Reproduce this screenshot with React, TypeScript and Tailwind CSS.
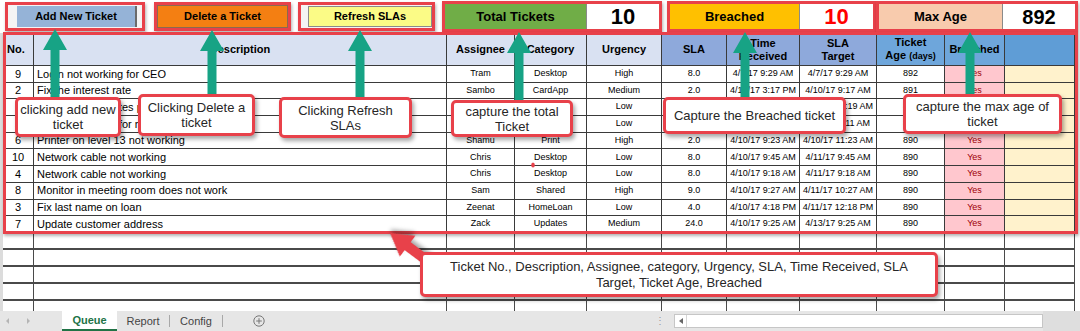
import React from "react";

type Row = {
  no: string;
  desc: string;
  who: string;
  cat: string;
  urg: string;
  sla: string;
  rec: string;
  tgt: string;
  age: string;
};

const rows: Row[] = [
  { no: "9", desc: "Login not working for CEO", who: "Tram", cat: "Desktop", urg: "High", sla: "8.0", rec: "4/7/17 9:29 AM", tgt: "4/7/17 9:29 AM", age: "892" },
  { no: "2", desc: "Fix the interest rate", who: "Sambo", cat: "CardApp", urg: "Medium", sla: "2.0", rec: "4/10/17 3:17 PM", tgt: "4/10/17 9:17 AM", age: "891" },
  { no: "1", desc: "Fix home loan rates page", who: "Kim", cat: "HomeLoan", urg: "Low", sla: "2.0", rec: "4/10/17 9:19 AM", tgt: "4/10/17 11:19 AM", age: "891" },
  { no: "5", desc: "Reset password for manager", who: "Lee", cat: "Desktop", urg: "Low", sla: "8.0", rec: "4/10/17 9:11 AM", tgt: "4/11/17 9:11 AM", age: "890" },
  { no: "6", desc: "Printer on level 13 not working", who: "Shamu", cat: "Print", urg: "High", sla: "2.0", rec: "4/10/17 9:23 AM", tgt: "4/10/17 11:23 AM", age: "890" },
  { no: "10", desc: "Network cable not working", who: "Chris", cat: "Desktop", urg: "Low", sla: "8.0", rec: "4/10/17 9:45 AM", tgt: "4/11/17 9:45 AM", age: "890" },
  { no: "4", desc: "Network cable not working", who: "Chris", cat: "Desktop", urg: "Low", sla: "8.0", rec: "4/10/17 9:18 AM", tgt: "4/11/17 9:18 AM", age: "890" },
  { no: "8", desc: "Monitor in meeting room does not work", who: "Sam", cat: "Shared", urg: "High", sla: "9.0", rec: "4/10/17 9:27 AM", tgt: "4/11/17 10:27 AM", age: "890" },
  { no: "3", desc: "Fix last name on loan", who: "Zeenat", cat: "HomeLoan", urg: "Low", sla: "4.0", rec: "4/10/17 4:18 PM", tgt: "4/11/17 12:18 PM", age: "890" },
  { no: "7", desc: "Update customer address", who: "Zack", cat: "Updates", urg: "Medium", sla: "24.0", rec: "4/10/17 9:25 AM", tgt: "4/13/17 9:25 AM", age: "890" },
];

const cols = "grid grid-cols-[31px_413px_68px_72px_75px_65px_73px_77px_68px_60px_70px]";
const cell = "border-r border-b border-[#3a3a3a] flex items-center justify-center overflow-hidden whitespace-nowrap";

// green arrows: center x, tip y, bottom y
const arrows = [
  [55, 29, 98],
  [212, 30, 96],
  [360, 30, 98],
  [519, 32, 101],
  [745, 32, 98],
  [970, 32, 95],
];

function Callout({ className, children }: { className: string; children: React.ReactNode }) {
  return (
    <div
      className={`absolute bg-white border-[3px] border-[#e8414a] rounded-[5px] shadow-[2px_3px_4px_rgba(0,0,0,0.35)] flex items-center justify-center text-center text-[13px] leading-[15px] text-[#262626] ${className}`}
    >
      {children}
    </div>
  );
}

export default function App() {
  return (
    <div className="relative w-[1080px] h-[331px] overflow-hidden bg-white font-['Liberation_Sans',Arial,sans-serif] text-black">
      {/* toolbar row */}
      <div className="h-[33px] flex items-center">
        <div className="ml-[5px] w-[140px] h-[29px] border-[3px] border-[#e8414a] shadow-[1px_2px_3px_rgba(0,0,0,0.3)] flex items-center bg-[#f4f4f4]">
          <div className="ml-[9px] w-[120px] h-[21px] bg-[#95b3d7] border-r-2 border-[#6b6b6b] flex items-center justify-center text-[11px] font-bold">
            Add New Ticket
          </div>
        </div>
        <div className="ml-[9px] w-[137px] h-[29px] border-[3px] border-[#e8414a] shadow-[1px_2px_3px_rgba(0,0,0,0.3)] flex items-center bg-[#f4f4f4]">
          <div className="w-full h-full bg-[#f47f12] border border-[#8a6a50] flex items-center justify-center text-[11px] font-bold">
            Delete a Ticket
          </div>
        </div>
        <div className="ml-[7px] w-[137px] h-[29px] border-[3px] border-[#e8414a] shadow-[1px_2px_3px_rgba(0,0,0,0.3)] flex items-center bg-[#f4f4f4]">
          <div className="ml-[7px] flex-1 h-[21px] bg-[#fbfb86] border border-[#8a8a8a] flex items-center justify-center text-[11px] font-bold">
            Refresh SLAs
          </div>
        </div>
        <div className="ml-[7px] w-[220px] h-[31px] border-[3px] border-[#e8414a] shadow-[1px_2px_3px_rgba(0,0,0,0.3)] flex">
          <div className="w-[142px] bg-[#70ad47] border-r border-[#8a8a8a] flex items-center justify-center text-[13px] font-bold">
            Total Tickets
          </div>
          <div className="flex-1 bg-white flex items-center justify-center text-[22px] font-bold">10</div>
        </div>
        <div className="ml-[5px] w-[209px] h-[31px] border-[3px] border-[#e8414a] shadow-[1px_2px_3px_rgba(0,0,0,0.3)] flex">
          <div className="w-[130px] bg-[#ffc000] border-r border-[#8a8a8a] flex items-center justify-center text-[13px] font-bold">
            Breached
          </div>
          <div className="flex-1 bg-white flex items-center justify-center text-[22px] font-bold text-[#ff0000]">10</div>
        </div>
        <div className="w-[202px] h-[31px] border-[3px] border-[#e8414a] shadow-[1px_2px_3px_rgba(0,0,0,0.3)] flex">
          <div className="w-[124px] bg-[#f8cbad] border-r border-[#8a8a8a] flex items-center justify-center text-[13px] font-bold">
            Max Age
          </div>
          <div className="flex-1 bg-white flex items-center justify-center text-[20px] font-bold">892</div>
        </div>
      </div>

      {/* sheet */}
      <div className="flex">
        <div className="w-[3px] bg-[#dcdcdc]" />
        <div>
          <div className={`${cols} h-[33px] border-t border-[#3a3a3a] text-[11px] font-bold leading-[13px]`}>
            <div className={`${cell} bg-[#d9e1f2] !justify-start pl-[4px]`}>No.</div>
            <div className={`${cell} bg-[#d9e1f2]`}>Description</div>
            <div className={`${cell} bg-[#d9e1f2]`}>Assignee</div>
            <div className={`${cell} bg-[#d9e1f2]`}>Category</div>
            <div className={`${cell} bg-[#d9e1f2]`}>Urgency</div>
            <div className={`${cell} bg-[#8ea9db]`}>SLA</div>
            <div className={`${cell} bg-[#8ea9db] flex-col text-center`}>
              <span>Time</span>
              <span>Received</span>
            </div>
            <div className={`${cell} bg-[#8ea9db] flex-col text-center`}>
              <span>SLA</span>
              <span>Target</span>
            </div>
            <div className={`${cell} bg-[#6ea6db] flex-col text-center`}>
              <span>Ticket</span>
              <span>
                Age <span className="text-[9px]">(days)</span>
              </span>
            </div>
            <div className={`${cell} bg-[#6ea6db]`}>Breached</div>
            <div className={`${cell} bg-[#5f9dd6]`} />
          </div>

          {rows.map((r, i) => (
            <div key={i} className={`${cols} h-[16.7px]`}>
              <div className={`${cell} text-[11px]`}>{r.no}</div>
              <div className={`${cell} !justify-start pl-[3px] text-[11px]`}>{r.desc}</div>
              <div className={`${cell} text-[9px]`}>{r.who}</div>
              <div className={`${cell} text-[9px]`}>{r.cat}</div>
              <div className={`${cell} text-[9px]`}>{r.urg}</div>
              <div className={`${cell} text-[9px]`}>{r.sla}</div>
              <div className={`${cell} text-[9px]`}>{r.rec}</div>
              <div className={`${cell} text-[9px]`}>{r.tgt}</div>
              <div className={`${cell} text-[9px]`}>{r.age}</div>
              <div className={`${cell} text-[9px] bg-[#ffc7ce] text-[#9c0006]`}>Yes</div>
              <div className={`${cell} bg-[#fff2cc]`} />
            </div>
          ))}

          <div className="h-[78px] overflow-hidden">
            {[0, 1, 2, 3, 4].map((k) => (
              <div key={k} className={`${cols} h-[17px]`}>
                {Array.from({ length: 11 }).map((_, j) => (
                  <div key={j} className="border-r border-b-2 border-[#4a4a4a]" />
                ))}
              </div>
            ))}
          </div>
        </div>
      </div>

      {/* sheet tabs */}
      <div className="h-[20px] bg-[#e6e6e6] flex items-center text-[11px] text-[#444]">
        <svg width="40" height="10" className="ml-[3px]">
          <polygon points="6,2 3,5 6,8" fill="#b5b5b5" />
          <polygon points="24,2 27,5 24,8" fill="#b5b5b5" />
        </svg>
        <div className="ml-[19px] w-[55px] h-full bg-white border-b-2 border-[#217346] flex items-center justify-center font-bold text-[#217346]">
          Queue
        </div>
        <div className="w-[52px] flex items-center justify-center">Report</div>
        <div className="w-px h-[12px] bg-[#a8a8a8]" />
        <div className="w-[52px] flex items-center justify-center">Config</div>
        <div className="w-px h-[12px] bg-[#a8a8a8]" />
        <svg width="12" height="12" className="ml-[30px]" viewBox="0 0 12 12">
          <circle cx="6" cy="6" r="5.2" fill="none" stroke="#777" strokeWidth="1" />
          <path d="M6 3.2v5.6M3.2 6h5.6" stroke="#777" strokeWidth="1" />
        </svg>
        <div className="ml-[390px] text-[#9a9a9a] text-[10px]">⋮</div>
        <div className="ml-[9px] w-[369px] h-[14px] bg-white border border-[#c6c6c6] flex items-center">
          <div className="w-[12px] h-full border-r border-[#d6d6d6] flex items-center justify-center">
            <svg width="4" height="6">
              <polygon points="4,0 0,3 4,6" fill="#666" />
            </svg>
          </div>
        </div>
        <div className="flex-1 h-full bg-[#dedede]" />
      </div>

      {/* annotations */}
      <div className="absolute left-[3px] top-[32px] w-[1075px] h-[202px] border-[3px] border-[#e8414a] shadow-[1px_2px_3px_rgba(0,0,0,0.3)] pointer-events-none" />

      <svg className="absolute left-0 top-0 pointer-events-none" width="1080" height="331">
        {arrows.map(([cx, ty, by], i) => (
          <polygon
            key={i}
            points={`${cx},${ty} ${cx + 12},${ty + 21} ${cx + 4.5},${ty + 21} ${cx + 4.5},${by} ${cx - 4.5},${by} ${cx - 4.5},${ty + 21} ${cx - 12},${ty + 21}`}
            fill="#17a385"
          />
        ))}
        <g transform="translate(390 233) rotate(216.7)" style={{ filter: "drop-shadow(2px 3px 2px rgba(0,0,0,0.35))" }}>
          <polygon points="0,0 -22,-13 -22,-5 -56,-5 -56,5 -22,5 -22,13" fill="#e8414a" />
        </g>
        <ellipse cx="533" cy="165" rx="1.8" ry="2.6" fill="#e8414a" />
      </svg>

      <Callout className="left-[15px] top-[97px] w-[106px] h-[40px]">
        clicking add new
        <br />
        ticket
      </Callout>
      <Callout className="left-[138px] top-[94px] w-[117px] h-[42px]">
        Clicking Delete a
        <br />
        ticket
      </Callout>
      <Callout className="left-[279px] top-[97px] w-[133px] h-[41px]">
        Clicking Refresh
        <br />
        SLAs
      </Callout>
      <Callout className="left-[451px] top-[100px] w-[122px] h-[37px]">
        capture the total
        <br />
        Ticket
      </Callout>
      <Callout className="left-[663px] top-[97px] w-[183px] h-[37px]">Capture the Breached ticket</Callout>
      <Callout className="left-[903px] top-[94px] w-[159px] h-[40px]">
        capture the max age of
        <br />
        ticket
      </Callout>
      <Callout className="left-[420px] top-[252px] w-[518px] h-[45px] !leading-[16px]">
        Ticket No., Description, Assignee, category, Urgency, SLA, Time Received, SLA
        <br />
        Target, Ticket Age, Breached
      </Callout>
    </div>
  );
}
